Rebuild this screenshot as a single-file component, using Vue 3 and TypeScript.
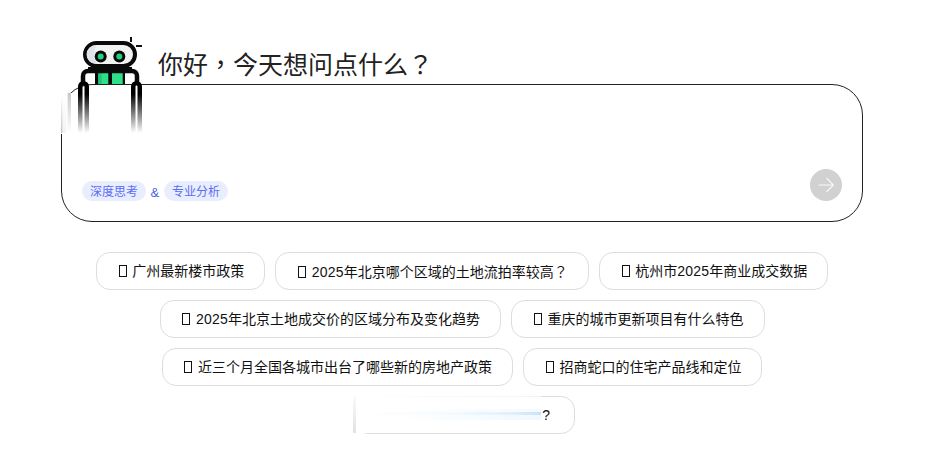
<script setup lang="ts">
interface Chip { text: string; tail?: string }
const rows: Chip[][] = [
  [{ text: '广州最新楼市政策' }, { text: '2025年北京哪个区域的土地流拍率较高', tail: '？' }, { text: '杭州市2025年商业成交数据' }],
  [{ text: '2025年北京土地成交价的区域分布及变化趋势' }, { text: '重庆的城市更新项目有什么特色' }],
  [{ text: '近三个月全国各城市出台了哪些新的房地产政策' }, { text: '招商蛇口的住宅产品线和定位' }],
]
const split = (t: string): string[] => t.split(/(2025)/).filter(Boolean)
</script>

<template>
  <div class="page">
    <header class="head">
      <svg class="robot" width="88" height="100" viewBox="0 0 88 100">
        <defs>
          <linearGradient id="hand" gradientUnits="userSpaceOnUse" x1="0" y1="58" x2="0" y2="97">
            <stop offset="0" stop-color="#000" />
            <stop offset="1" stop-color="#000" stop-opacity="0" />
          </linearGradient>
          <linearGradient id="edge" x1="0" y1="0" x2="0" y2="1">
            <stop offset="0" stop-color="#fff" />
            <stop offset="1" stop-color="#c4c4c4" />
          </linearGradient>
          <linearGradient id="edge2" x1="0" y1="0" x2="0" y2="1">
            <stop offset="0" stop-color="#c8c8c8" />
            <stop offset="1" stop-color="#fff" />
          </linearGradient>
        </defs>
        <rect x="0" y="57" width="19" height="41" fill="#fff" />
        <rect x="2" y="59" width="2.4" height="38" fill="url(#edge)" />
        <rect x="4.4" y="59" width="4" height="38" fill="url(#edge)" opacity=".2" />
        <rect x="9.6" y="57" width="3.4" height="40" fill="url(#edge2)" />
        <path d="M73 1v5M78 10h6" stroke="#111" stroke-width="2" fill="none" />
        <rect x="26" y="36" width="52" height="12" fill="#fff" />
        <rect x="37" y="36" width="30" height="12" fill="#0a0a0a" />
        <rect x="40.3" y="37" width="10" height="11" fill="#2fe08b" />
        <rect x="40.3" y="37" width="3.4" height="11" fill="#1fc576" />
        <rect x="54" y="37" width="10.7" height="11" fill="#2fe08b" />
        <path d="M25 48V40a5 5 0 0 1 5-5H74a5 5 0 0 1 5 5V48" fill="none" stroke="#0a0a0a" stroke-width="4.5" />
        <rect x="30" y="31" width="44" height="6" fill="#0a0a0a" />
        <rect x="27" y="7" width="50" height="23" rx="11.5" fill="#f2f2f2" stroke="#0a0a0a" stroke-width="4" />
        <path d="M39 9h-1a9.5 9.5 0 0 0 0 19h1a17 17 0 0 1 0-19z" fill="#dfe3ea" />
        <circle cx="42.7" cy="20.5" r="6" fill="#0a0a0a" /><circle cx="42.7" cy="20.5" r="3" fill="#1fd07c" />
        <circle cx="61.3" cy="20.5" r="6" fill="#0a0a0a" /><circle cx="61.3" cy="20.5" r="3" fill="#1fd07c" />
        <path d="M22.25 97V50.5a3.25 3.25 0 0 1 6.5 0V97" fill="none" stroke="url(#hand)" stroke-width="4.5" />
        <path d="M75.25 97V50.5a3.25 3.25 0 0 1 6.5 0V97" fill="none" stroke="url(#hand)" stroke-width="4.5" />
      </svg>
      <h1 class="title">你好<span class="tc">，</span>今天想问点什么<span class="tc">？</span></h1>
    </header>
    <section class="box">
      <div class="tags">
        <span class="tag">深度思考</span>
        <span class="amp">&amp;</span>
        <span class="tag">专业分析</span>
      </div>
      <button class="send" type="button" aria-label="发送">
        <svg width="16" height="16" viewBox="0 0 16 16"><path d="M.5 8h15M8.5 1l7 7-7 7" fill="none" stroke="#fff" stroke-width="1.2" opacity=".85" /></svg>
      </button>
    </section>
    <div class="chips">
      <div v-for="(row, i) in rows" :key="i" class="row">
        <span v-for="c in row" :key="c.text" class="chip"><i class="tofu"></i> <span v-for="(p, j) in split(c.text)" :key="j" :class="{ num: p === '2025' }">{{ p }}</span><span v-if="c.tail" class="tc">{{ c.tail }}</span></span>
      </div>
      <div class="row shifted">
        <span class="chip last"><span class="veil"></span>?</span>
      </div>
    </div>
  </div>
</template>

<style>
html, body { margin: 0; background: #fff; }
</style>

<style scoped>
.page {
  width: 802px;
  height: 467px;
  margin-left: 61px;
  font-family: "Liberation Sans", "Noto Sans CJK SC", sans-serif;
  overflow: hidden;
  color: #111;
}
.head { display: flex; align-items: flex-end; height: 84px; position: relative; z-index: 1; }
.robot { position: absolute; left: -3px; top: 36px; }
.tc { font-family: "Noto Sans CJK TC", sans-serif; }
.title { margin: 0 0 2px 97px; font-size: 25px; line-height: 34px; font-weight: 400; color: #222; }
.box {
  box-sizing: border-box;
  height: 138px;
  border: 1px solid #222;
  border-radius: 31px;
  background: #fff;
  display: flex;
  align-items: flex-end;
  justify-content: space-between;
  padding: 0 20px 20px;
}
.tags { display: flex; align-items: center; gap: 4.6px; font-size: 12px; }
.tag { background: #e9eeff; color: #5b6cf5; border-radius: 10px; height: 20px; line-height: 22px; padding: 0 8px; }
.amp { color: #4a5fe8; font-size: 13px; padding-top: 3px; }
.send {
  width: 32px; height: 32px; border: 0; border-radius: 50%; padding: 0;
  background: #d1d1d1; display: flex; align-items: center; justify-content: center;
}
.chips { display: flex; flex-direction: column; gap: 10px; margin-top: 30px; }
.row { display: flex; justify-content: center; gap: 10px; }
.shifted { padding-left: 5px; }
.chip {
  position: relative;
  box-sizing: border-box;
  height: 38px;
  line-height: 36px;
  padding: 0 20px;
  border: 1px solid #ddd;
  border-radius: 14px;
  font-size: 14px;
  color: #111;
  white-space: nowrap;
}
.num { letter-spacing: .22px; }
.tofu {
  display: inline-block;
  box-sizing: border-box;
  width: 8px;
  height: 12px;
  margin: 0 1.8px;
  border: 1px solid #111;
  vertical-align: -1px;
}
.last { width: 221px; text-align: right; padding: 0 24px 0 0; }
.veil {
  position: absolute; left: -2px; top: -1px; bottom: 0; width: 188px;
  background:
    linear-gradient(90deg, rgba(200,226,250,0) 0%, rgba(200,226,250,.15) 50%, rgba(200,226,250,.55) 85%, #c8e2fa 100%) 0 16px / 100% 3px no-repeat,
    linear-gradient(90deg, rgba(236,247,254,0) 20%, #f0f9fe 100%) 0 19px / 100% 5px no-repeat,
    linear-gradient(90deg, rgba(240,248,254,0) 30%, #f3fafe 100%) 0 13px / 100% 3px no-repeat,
    linear-gradient(180deg, #fafafa, #e2e2e2) 0 0 / 3px 100% no-repeat,
    linear-gradient(90deg, #fff, #f3f3f3) 0 0 / 100% 1px no-repeat,
    #fff;
}
</style>
